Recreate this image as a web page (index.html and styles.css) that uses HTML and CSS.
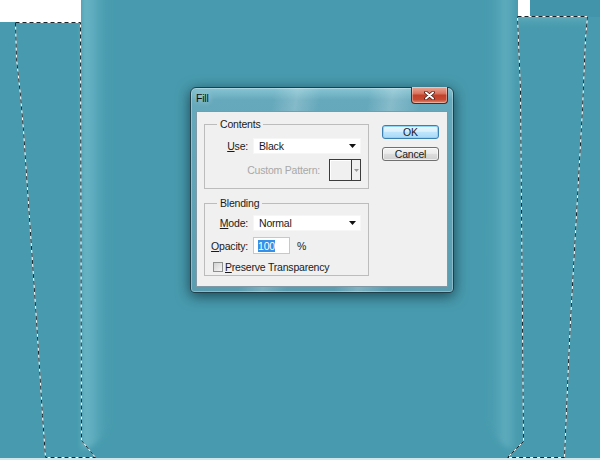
FILE: index.html
```html
<!DOCTYPE html>
<html lang="en">
<head>
    <meta charset="UTF-8">
    <meta name="viewport" content="width=device-width, initial-scale=1.0">
    <title>Fill</title>
    <link rel="stylesheet" href="styles.css">
</head>
<body>
    <div class="desktop">
        <!-- Canvas behind the dialog: artwork edges and the active selection -->
        <svg class="backdrop" width="600" height="472" viewBox="0 0 600 472">
            <defs>
                <linearGradient id="edge-left" x1="0" x2="1" y1="0" y2="0">
                    <stop offset="0" stop-color="#6cb6c6"/>
                    <stop offset="0.4" stop-color="#5cabbd"/>
                    <stop offset="1" stop-color="#489bae" stop-opacity="0"/>
                </linearGradient>
                <linearGradient id="edge-right" x1="0" x2="1" y1="0" y2="0">
                    <stop offset="0" stop-color="#489bae" stop-opacity="0"/>
                    <stop offset="0.65" stop-color="#5dabbd"/>
                    <stop offset="1" stop-color="#52a3b6"/>
                </linearGradient>
                <linearGradient id="lid" x1="0" x2="0" y1="0" y2="1">
                    <stop offset="0" stop-color="#5eabbc"/>
                    <stop offset="1" stop-color="#489bae" stop-opacity="0"/>
                </linearGradient>
                <filter id="soft" x="-20%" y="-5%" width="140%" height="110%">
                    <feGaussianBlur stdDeviation="2.5"/>
                </filter>
            </defs>
            <rect width="600" height="472" fill="#489bae"/>
            <rect x="530" y="0" width="70" height="17" fill="#4194a9"/>
            <g filter="url(#soft)">
                <path d="M82 -10 H112 V420 Q102 442 88 448 H82 Z" fill="url(#edge-left)"/>
                <path d="M486 -10 H514 V448 H508 Q496 442 488 420 Z" fill="url(#edge-right)"/>
            </g>
            <rect x="518" y="17" width="69" height="12" fill="url(#lid)"/>
            <rect x="0" y="0" width="81" height="22" fill="#ffffff"/>
            <rect x="518" y="0" width="12" height="16" fill="#ffffff"/>
            <rect x="0" y="459" width="600" height="13" fill="#ffffff"/>
            <rect x="0" y="458" width="600" height="2" fill="#cfe8ee"/>

            <!-- marching ants -->
            <g fill="none" stroke-width="1">
                <polygon points="15.5,22.5 80.5,22.5 81.5,440.5 95.5,457.5 45.5,457.5 42.5,415.5 36.5,320.5 23.5,130.5 20.5,95.5 16.5,58.5" stroke="#ffffff"/>
                <polygon points="15.5,22.5 80.5,22.5 81.5,440.5 95.5,457.5 45.5,457.5 42.5,415.5 36.5,320.5 23.5,130.5 20.5,95.5 16.5,58.5" stroke="#14252d" stroke-dasharray="4 3"/>
                <polygon points="517.5,16.5 587.5,16.5 585.5,38.5 583.5,85.5 582.5,108.5 570.5,320.5 568.5,363.5 566.5,410.5 564.5,457.5 507.5,457.5 523.5,441.5 520.5,90.5" stroke="#ffffff"/>
                <polygon points="517.5,16.5 587.5,16.5 585.5,38.5 583.5,85.5 582.5,108.5 570.5,320.5 568.5,363.5 566.5,410.5 564.5,457.5 507.5,457.5 523.5,441.5 520.5,90.5" stroke="#14252d" stroke-dasharray="4 3"/>
            </g>
        </svg>

        <!-- Fill dialog -->
        <div class="window">
            <div class="titlebar">
                <span class="title">Fill</span>
                <button type="button" class="close-btn" aria-label="Close">
                    <svg width="11" height="9" viewBox="0 0 11 9">
                        <path d="M2 1.5 L9 7.5 M9 1.5 L2 7.5" stroke="#4a1a12" stroke-width="3.6" stroke-linecap="round"/>
                        <path d="M2 1.5 L9 7.5 M9 1.5 L2 7.5" stroke="#ffffff" stroke-width="2" stroke-linecap="round"/>
                    </svg>
                </button>
            </div>

            <div class="client">
                <div class="groups">
                    <div class="group group-contents">
                        <span class="group-title">Contents</span>
                        <div class="fields">
                            <label class="field-label"><u>U</u>se:</label>
                            <div class="dropdown">
                                <span>Black</span>
                                <svg class="caret" width="7" height="4" viewBox="0 0 7 4"><polygon points="0,0 7,0 3.5,4" fill="#111"/></svg>
                            </div>
                            <div class="pattern-row">
                                <span class="disabled">Custom Pattern:</span>
                                <div class="pattern-box">
                                    <span class="pattern-swatch"></span>
                                    <span class="pattern-arrow">
                                        <svg width="5" height="3" viewBox="0 0 5 3"><polygon points="0,0 5,0 2.5,3" fill="#9a9a9a"/></svg>
                                    </span>
                                </div>
                            </div>
                        </div>
                    </div>

                    <div class="group group-blending">
                        <span class="group-title">Blending</span>
                        <div class="fields">
                            <label class="field-label"><u>M</u>ode:</label>
                            <div class="dropdown">
                                <span>Normal</span>
                                <svg class="caret" width="7" height="4" viewBox="0 0 7 4"><polygon points="0,0 7,0 3.5,4" fill="#111"/></svg>
                            </div>
                            <label class="field-label"><u>O</u>pacity:</label>
                            <div class="opacity">
                                <span class="text-input"><span class="selected">100</span></span>
                                <span>%</span>
                            </div>
                            <label class="check-row">
                                <span class="checkbox"></span>
                                <span><u>P</u>reserve Transparency</span>
                            </label>
                        </div>
                    </div>
                </div>

                <div class="buttons">
                    <button type="button" class="btn btn-default">OK</button>
                    <button type="button" class="btn">Cancel</button>
                </div>
            </div>
        </div>
    </div>
</body>
</html>
```

FILE: styles.css
```css
body {
    margin: 0;
    font-family: 'Liberation Sans', Arial, sans-serif;
    font-size: 10.5px;
    letter-spacing: -0.2px;
    color: #1a1a1a;
}

.desktop {
    position: relative;
    width: 600px;
    height: 472px;
    box-sizing: border-box;
    padding: 87px 0 0 190px;
    overflow: hidden;
    background: #489bae;
}

.backdrop {
    position: absolute;
    left: 0;
    top: 0;
}

/* Aero style window frame */
.window {
    position: relative;
    width: 264px;
    height: 206px;
    box-sizing: border-box;
    padding: 0 5px 5px 5px;
    border: 1px solid #1f3f4a;
    border-radius: 6px 6px 4px 4px;
    background:
        linear-gradient(100deg, rgba(255,255,255,0) 28%, rgba(255,255,255,0.2) 36%, rgba(255,255,255,0) 44%, rgba(255,255,255,0) 60%, rgba(255,255,255,0.22) 68%, rgba(255,255,255,0) 78%),
        linear-gradient(180deg, #86c4d3 0, #66a9bc 12px, #5a9db1 100%);
    box-shadow: inset 0 0 0 1px rgba(255,255,255,0.3), 0 3px 14px rgba(0, 25, 35, 0.65);
}

.titlebar {
    display: flex;
    align-items: flex-start;
    height: 23px;
}

.title {
    padding-top: 4px;
    line-height: 12px;
    color: #111;
    text-shadow: 0 0 6px rgba(255,255,255,0.8);
}

.close-btn {
    display: flex;
    align-items: center;
    justify-content: center;
    width: 37px;
    height: 17px;
    margin: -1px 0 0 auto;
    padding: 0;
    border: 1px solid #4b2a26;
    border-top: none;
    border-radius: 0 0 4px 4px;
    background: linear-gradient(180deg, #e8a998 0, #d8755f 40%, #c2412a 52%, #c54a31 78%, #e08a70 100%);
    box-shadow: inset 0 0 0 1px rgba(255,255,255,0.35);
}

.client {
    display: flex;
    height: 176px;
    box-sizing: border-box;
    padding: 12px 8px 0 7px;
    border: 1px solid #7f9aa4;
    background: #f0f0f0;
}

.group {
    width: 165px;
    box-sizing: border-box;
    padding: 0 7px 7px 0;
    border: 1px solid #bcbcbc;
}

.group-blending {
    margin-top: 14px;
    padding-bottom: 4px;
}

.group-title {
    display: block;
    width: max-content;
    margin: -7px 0 0 12px;
    padding: 0 3px;
    line-height: 12px;
    background: #f0f0f0;
}

.fields {
    display: grid;
    grid-template-columns: 43px 108px;
    column-gap: 5px;
    row-gap: 5px;
    align-items: center;
    margin-top: 8px;
}

.group-contents .fields {
    grid-template-rows: 16px 22px;
}

.group-blending .fields {
    grid-template-rows: 16px 17px 11px;
    row-gap: 6px;
    margin-top: 6px;
}

.field-label {
    text-align: right;
    line-height: 12px;
}

.dropdown {
    display: flex;
    align-items: center;
    justify-content: space-between;
    height: 16px;
    box-sizing: border-box;
    padding: 0 4px 0 5px;
    background: #fff;
    border: 1px solid #f6f6f6;
}

.pattern-row {
    grid-column: 1 / -1;
    display: flex;
    align-items: center;
    justify-content: flex-end;
    gap: 9px;
}

.disabled {
    color: #a8a8a8;
}

.pattern-box {
    display: flex;
    width: 32px;
    height: 22px;
    box-sizing: border-box;
    border: 1px solid #3c3c3c;
    background: #f0f0f0;
}

.pattern-swatch {
    flex: 1;
    box-shadow: inset 1px 1px 0 #fff;
}

.pattern-arrow {
    display: flex;
    align-items: center;
    justify-content: center;
    width: 8px;
    border-left: 1px solid #3c3c3c;
}

.opacity {
    display: flex;
    align-items: center;
    gap: 7px;
}

.text-input {
    display: flex;
    align-items: center;
    width: 37px;
    height: 17px;
    box-sizing: border-box;
    padding-left: 4px;
    border: 1px solid #c8c8c8;
    background: #fff;
}

.selected {
    line-height: 12px;
    background: #3590e8;
    color: #fff;
}

.check-row {
    grid-column: 1 / -1;
    display: flex;
    align-items: center;
    gap: 2px;
    margin-top: 2px;
    padding-left: 8px;
    line-height: 12px;
}

.checkbox {
    width: 10px;
    height: 10px;
    box-sizing: border-box;
    border: 1px solid #8e8f8f;
    background: linear-gradient(135deg, #d2d2d2, #f6f6f6);
}

.buttons {
    display: flex;
    flex-direction: column;
    gap: 8px;
    width: 57px;
    margin: 1px 0 0 13px;
}

.btn {
    height: 14px;
    padding: 0;
    border: 1px solid #707070;
    border-radius: 3px;
    font: inherit;
    letter-spacing: inherit;
    line-height: 12px;
    color: #1a1a1a;
    background: linear-gradient(180deg, #f4f4f4 0, #ebebeb 45%, #dddddd 50%, #cfcfcf 100%);
    box-shadow: inset 0 0 0 1px rgba(255,255,255,0.6);
}

.btn-default {
    border-color: #3c7fb1;
    background: linear-gradient(180deg, #eaf6fd 0, #d9f0fc 45%, #bee6fd 50%, #a7d9f5 100%);
    box-shadow: inset 0 0 0 1px #8fd4f6;
}
```
